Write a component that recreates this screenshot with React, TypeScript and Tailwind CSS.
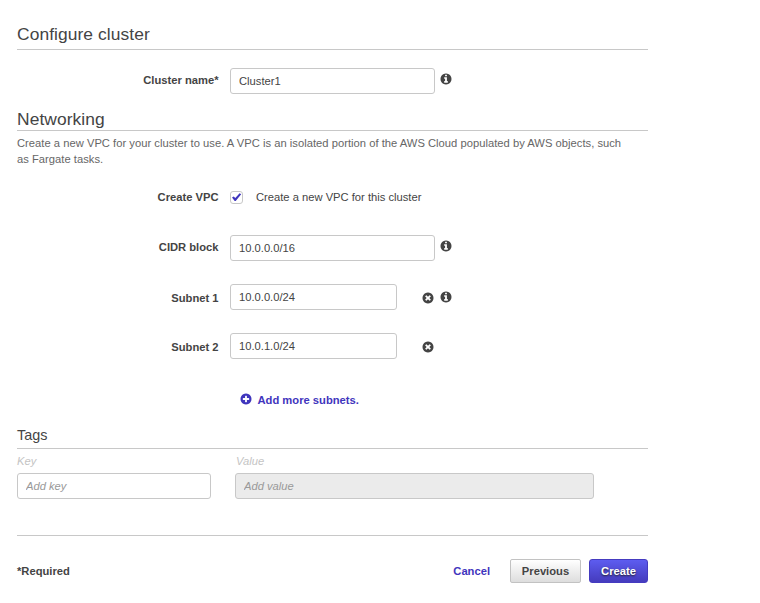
import type { ReactNode } from 'react';

const field =
  'block h-[26px] rounded-[3px] border border-[#c8c8c8] bg-white px-2 text-[11.2px] text-[#444] outline-none';

const disc =
  'M1536 896q0 209-103 385.5T1153.5 1561 768 1664t-385.5-103T103 1281.5 0 896t103-385.5T382.5 231 768 128t385.5 103T1433 510.5 1536 896z';

const glyphs = {
  info: 'M1024 1376v-160q0-14-9-23t-23-9h-96v-512q0-14-9-23t-23-9h-320q-14 0-23 9t-9 23v160q0 14 9 23t23 9h96v320h-96q-14 0-23 9t-9 23v160q0 14 9 23t23 9h448q14 0 23-9t9-23zM896 480v-160q0-14-9-23t-23-9h-192q-14 0-23 9t-9 23v160q0 14 9 23t23 9h192q14 0 23-9t9-23z',
  remove:
    'M1149 1122q0-26-19-45L949 896l181-181q19-19 19-45 0-27-19-46l-90-90q-19-19-46-19-26 0-45 19L768 715 587 534q-19-19-45-19-27 0-46 19l-90 90q-19 19-19 46 0 26 19 45l181 181-181 181q-19 19-19 45 0 27 19 46l90 90q19 19 46 19 26 0 45-19l181-181 181 181q19 19 45 19 27 0 46-19l90-90q19-19 19-46z',
  add: 'M1216 960V832q0-26-19-45t-45-19H896V512q0-26-19-45t-45-19H704q-26 0-45 19t-19 45v256H384q-26 0-45 19t-19 45v128q0 26 19 45t45 19h256v256q0 26 19 45t45 19h128q26 0 45-19t19-45v-256h256q26 0 45-19t19-45z',
};

function Icon({ name, className = '' }: { name: keyof typeof glyphs; className?: string }) {
  return (
    <svg viewBox="-70 58 1676 1676" className={`size-3 ${className}`} fill="currentColor" fillRule="evenodd">
      <path d={disc + glyphs[name]} />
    </svg>
  );
}

function Row({ label, className, labelClass = '', children }: { label: string; className: string; labelClass?: string; children: ReactNode }) {
  return (
    <div className={`flex h-[26px] items-center ${className}`}>
      <label className={`mr-[11.5px] w-[201.5px] text-right font-bold ${labelClass}`}>{label}</label>
      {children}
    </div>
  );
}

export default function App() {
  return (
    <main className="h-[603px] w-[760px] overflow-hidden bg-white pl-[17px] font-['Liberation_Sans',Arial,sans-serif] text-[11.2px] leading-4 text-[#444]">
      <div className="w-[631px]">
        <h1 className="h-[50px] border-b border-[#c8c8c8] pt-6 text-[17.4px] leading-5 tracking-[0.08px]">Configure cluster</h1>

        <Row label="Cluster name*" className="mt-[18px]" labelClass="-mt-[2px]">
          <input className={`${field} w-[205px]`} defaultValue="Cluster1" />
          <Icon name="info" className="-mt-1 ml-[5px]" />
        </Row>

        <h2 className="mt-[15px] h-[22px] border-b border-[#c8c8c8] text-[17.4px] leading-5 tracking-[0.08px]">Networking</h2>
        <p className="mt-1 tracking-[0.02px] text-[#666]">
          Create a new VPC for your cluster to use. A VPC is an isolated portion of the AWS Cloud populated by AWS objects, such
          <br />
          as Fargate tasks.
        </p>

        <Row label="Create VPC" className="mt-[17px]">
          <span className="flex size-[13px] items-center justify-center rounded-[3px] border border-[#c8c8c8]">
            <svg viewBox="0 0 11 11" className="size-[11px] shrink-0" fill="#3f35bd">
              <path d="M1 5.4 2.7 4.4 4.3 6 8.6 1.3 10.2 2.3 4.7 9 3.7 9Z" />
            </svg>
          </span>
          <span className="ml-[13px]">Create a new VPC for this cluster</span>
        </Row>

        <Row label="CIDR block" className="mt-[25px]" labelClass="-mt-[2px]">
          <input className={`${field} w-[205px]`} defaultValue="10.0.0.0/16" />
          <Icon name="info" className="-mt-1 ml-[5px]" />
        </Row>

        <Row label="Subnet 1" className="mt-[23px]" labelClass="mt-[2px]">
          <input className={`${field} w-[167px]`} defaultValue="10.0.0.0/24" />
          <Icon name="remove" className="mt-[2px] ml-[25px]" />
          <Icon name="info" className="ml-[6px]" />
        </Row>

        <Row label="Subnet 2" className="mt-[23px]" labelClass="mt-[2px]">
          <input className={`${field} w-[167px]`} defaultValue="10.0.1.0/24" />
          <Icon name="remove" className="mt-[2px] ml-[25px]" />
        </Row>

        <button className="mt-[33px] ml-[223px] flex h-4 items-center gap-[5.5px] font-bold text-[#3f35bd]">
          <Icon name="add" className="-mt-[2px]" />
          Add more subnets.
        </button>

        <h3 className="mt-[17px] h-[24px] border-b border-[#c8c8c8] text-[14.4px] leading-5">Tags</h3>
        <div className="mt-1 flex gap-6 italic">
          <div className="w-[194px]">
            <div className="mb-1 h-4 text-[#c4c4c4]">Key</div>
            <input className={`${field} w-full placeholder:text-[#999]`} placeholder="Add key" />
          </div>
          <div className="w-[359px]">
            <div className="mb-1 h-4 pl-px text-[#c4c4c4]">Value</div>
            <input disabled className={`${field} w-full bg-[#ebebeb]! placeholder:text-[#999]`} placeholder="Add value" />
          </div>
        </div>

        <footer className="mt-9 flex h-12 items-end border-t border-[#c8c8c8] font-bold">
          <span className="mb-1 flex-1">*Required</span>
          <button className="mr-5 mb-1 text-[#3f35bd]">Cancel</button>
          <button className="mr-2 h-6 w-[71px] rounded-[2px] border border-[#c2c2c2] bg-linear-to-b from-white to-[#dddddd]">
            Previous
          </button>
          <button className="h-6 w-[59px] rounded-[3px] border border-[#453bc0] bg-linear-to-b from-[#5d5cf0] to-[#453bbd] text-white [text-shadow:0_1px_2px_#222]">
            Create
          </button>
        </footer>
      </div>
    </main>
  );
}
